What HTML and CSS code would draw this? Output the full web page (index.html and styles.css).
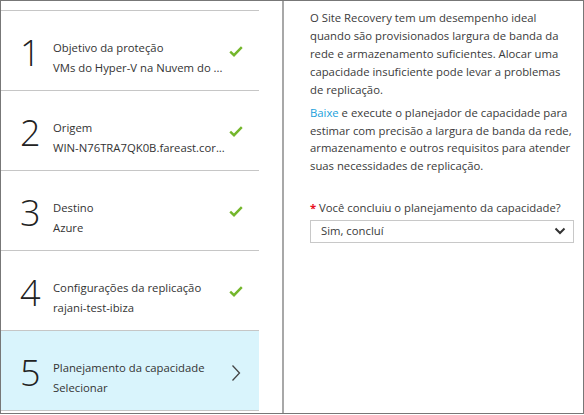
FILE: index.html
```html
<!DOCTYPE html>
<html lang="pt">
<head>
<meta charset="utf-8">
<link rel="stylesheet" href="styles.css">
</head>
<body>
<div class="frame">
  <div class="steps">
    <ul class="step-list">
      <li class="step">
        <span class="num">1</span>
        <div class="info"><div class="title">Objetivo da proteção</div><div class="value">VMs do Hyper-V na Nuvem do ...</div></div>
        <svg class="check" width="14" height="11" viewBox="0 0 14 11"><path d="M1.2 5.6 L5 9.2 L12.8 1.2" fill="none" stroke="#74b72c" stroke-width="2.4"/></svg>
      </li>
      <li class="step">
        <span class="num">2</span>
        <div class="info"><div class="title">Origem</div><div class="value">WIN-N76TRA7QK0B.fareast.cor...</div></div>
        <svg class="check" width="14" height="11" viewBox="0 0 14 11"><path d="M1.2 5.6 L5 9.2 L12.8 1.2" fill="none" stroke="#74b72c" stroke-width="2.4"/></svg>
      </li>
      <li class="step">
        <span class="num">3</span>
        <div class="info"><div class="title">Destino</div><div class="value">Azure</div></div>
        <svg class="check" width="14" height="11" viewBox="0 0 14 11"><path d="M1.2 5.6 L5 9.2 L12.8 1.2" fill="none" stroke="#74b72c" stroke-width="2.4"/></svg>
      </li>
      <li class="step">
        <span class="num">4</span>
        <div class="info"><div class="title">Configurações da replicação</div><div class="value">rajani-test-ibiza</div></div>
        <svg class="check" width="14" height="11" viewBox="0 0 14 11"><path d="M1.2 5.6 L5 9.2 L12.8 1.2" fill="none" stroke="#74b72c" stroke-width="2.4"/></svg>
      </li>
      <li class="step active">
        <span class="num">5</span>
        <div class="info"><div class="title">Planejamento da capacidade</div><div class="value">Selecionar</div></div>
        <svg class="chev" width="10" height="18" viewBox="0 0 10 18"><path d="M1.5 1.5 L8.5 9 L1.5 16.5" fill="none" stroke="#444" stroke-width="1.3"/></svg>
      </li>
    </ul>
  </div>
  <div class="divider"></div>
  <div class="detail">
    <p>O Site Recovery tem um desempenho ideal quando são provisionados largura de banda da rede e armazenamento suficientes. Alocar uma capacidade insuficiente pode levar a problemas de replicação.</p>
    <p><a class="link" href="#">Baixe</a> e execute o planejador de capacidade para estimar com precisão a largura de banda da rede, armazenamento e outros requisitos para atender suas necessidades de replicação.</p>
    <div class="field">
      <label class="label"><span class="req">*</span> Você concluiu o planejamento da capacidade?</label>
      <div class="select">
        <span>Sim, concluí</span>
        <svg width="12" height="8" viewBox="0 0 12 8"><path d="M1.5 1.5 L6 6 L10.5 1.5" fill="none" stroke="#333" stroke-width="2"/></svg>
      </div>
    </div>
  </div>
</div>
</body>
</html>
```

FILE: styles.css
```css
* { box-sizing: border-box; }
html, body { margin: 0; padding: 0; background: #fff; }
body {
  font-family: "Open Sans", "Noto Sans", sans-serif;
  font-size: 11.3px;
  color: #3a3a3a;
}
.frame {
  width: 584px;
  height: 414px;
  border: 1px solid #777;
  display: flex;
  overflow: hidden;
}
.steps {
  flex: none;
  width: 281px;
  padding-top: 9px;
}
.step-list {
  list-style: none;
  margin: 0;
  padding: 0;
  width: 258px;
  border-top: 1px solid #c6c6c6;
}
.step {
  height: 80px;
  border-bottom: 1px solid #c6c6c6;
  display: flex;
  align-items: center;
  padding-left: 19px;
}
.step.active { background: #d9f4fc; }
.num {
  flex: none;
  width: 33px;
  font-family: "Open Sans", sans-serif;
  font-weight: 300;
  font-size: 36px;
  line-height: 40px;
  color: #222;
  margin-top: 4px;
}
.info {
  flex: 1;
  min-width: 0;
  margin-top: 14px;
  line-height: 20px;
  white-space: nowrap;
  color: #333;
}
.check { flex: none; margin-right: 16px; margin-top: 2px; }
.chev { flex: none; margin-right: 18px; margin-top: 4px; }
.divider {
  flex: none;
  width: 2px;
  background: #a8a8a8;
}
.detail {
  flex: 1;
  padding: 8px 9px 0 26px;
  line-height: 18px;
}
.detail p { margin: 0 0 5px; }
.detail p + p { line-height: 17.7px; }
.link { color: #1aa0db; text-decoration: none; }
.field { margin-top: 24px; }
.label { display: block; line-height: 18px; }
.req { color: #e81123; font-weight: bold; }
.select {
  margin-top: 3px;
  height: 23px;
  border: 1px solid #c8c8c8;
  display: flex;
  align-items: center;
  justify-content: space-between;
  padding: 0 7px 0 10px;
}
```
